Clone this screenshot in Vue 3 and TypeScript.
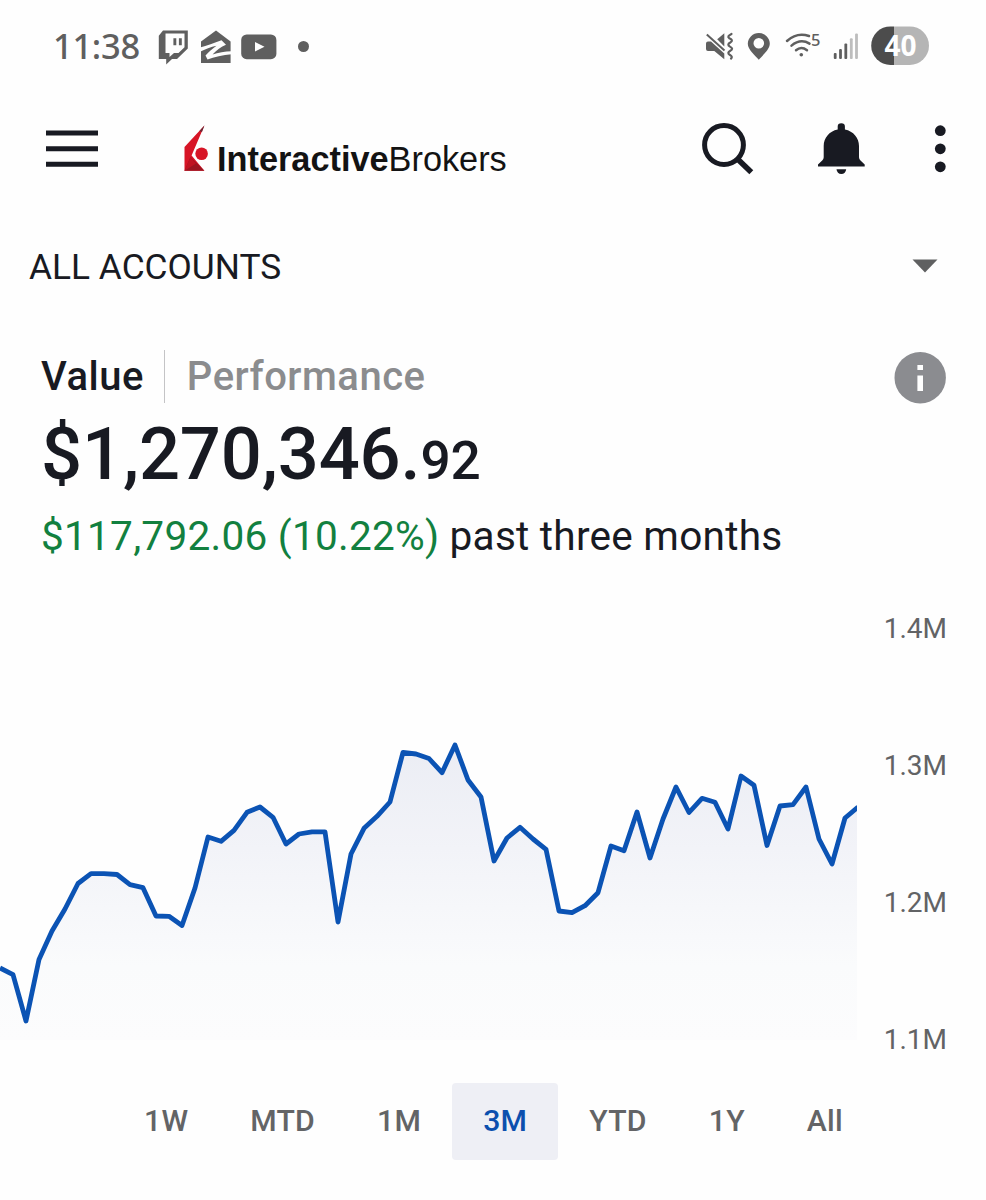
<script setup lang="ts">
import { ref } from 'vue'

const STEP = 13
const CHART_TOP = 600
const FLOOR = 440

// Vertical position of each daily sample inside the plot
const samples: number[] = [
  968, 974.7, 1021, 959.5, 931, 909, 883.5, 873.7, 873.7, 874.5, 884.7, 887.7, 916, 916.3, 925.5,
  888, 837, 841.3, 830.3, 812.3, 807, 817.3, 844, 834, 831.8, 831.8, 922, 854, 828.3, 816.3, 802,
  752.3, 754, 758.5, 772.7, 745, 780, 797, 861, 838, 827.3, 839, 849.3, 911, 912.7, 905.7, 892.7,
  846, 850.7, 812, 858, 819, 787, 812.5, 798.3, 802.3, 829, 776, 785.3, 845.5, 806, 804.7, 787,
  839, 864, 818, 807,
].map((y) => y - CHART_TOP)

const line = samples.map((y, i) => `${i * STEP},${y}`).join(' ')
const area = `0,${FLOOR} ${line} ${(samples.length - 1) * STEP},${FLOOR}`

const axis = ['1.4M', '1.3M', '1.2M', '1.1M']
const ranges = ['1W', 'MTD', '1M', '3M', 'YTD', '1Y', 'All']
const active = ref('3M')
</script>

<template>
  <main class="screen">
    <div class="status">
      <span class="clock">11:38</span>
      <svg class="twitch" width="32" height="40" viewBox="157 26 32 40">
        <path fill="#5f5f5f" fill-rule="evenodd" d="M163 30.5H187.8V48.5L177 59H172L166.2 64.4V59H158.8V35.8ZM165.5 33.6V53H169.5V57L174 53H178.5L184.5 47.2V33.6Z" />
        <path fill="#5f5f5f" d="M173.4 38.3h2.9v7h-2.9zM178.9 38.3h2.9v7h-2.9z" />
      </svg>
      <svg class="zillow" width="32" height="40" viewBox="200 26 32 40">
        <path fill="#5f5f5f" d="M216 30.5L230.6 41.5V63H201V41.5Z" />
        <path fill="#fefefe" d="M200 47.5C207 45.8 214 43 221.5 40.2L226 44.7C221 46.5 216.5 50 212.5 54.6C218 52.6 225 51.4 231.5 51.2V54.2C223 55 214 57 207.5 59.5L205.5 55.6C209 51.5 212.5 48.5 216.5 45.7C211 47 205 49 200 51.8Z" />
      </svg>
      <svg class="tube" width="36" height="40" viewBox="241 26 36 40">
        <rect x="241.2" y="34.4" width="35.2" height="24.8" rx="5.5" fill="#5f5f5f" />
        <path fill="#fff" d="M255 42V51.6L264.5 46.8Z" />
      </svg>
      <span class="more" />
      <svg class="system" width="230" height="40" viewBox="700 26 230 40">
        <g fill="#5f5f5f">
          <path d="M706 43.5Q706 41.5 708 41.5H711L724.3 53.5V59.2L714.3 51H708Q706 51 706 49Z" />
          <path d="M717.2 39.3L724.3 33.2V46.4Z" />
          <path d="M706.8 34.5L724.5 50.5" stroke="#5f5f5f" stroke-width="2" />
          <path d="M731.5 34Q726.5 36.5 729.3 38.2Q734 40.3 730.3 42.5Q726.5 44.5 730 46.6Q734 48.7 730.3 50.8Q726.5 53 730 55Q733 56.8 731 58.6" fill="none" stroke="#5f5f5f" stroke-width="2.2" stroke-linecap="round" />
          <path fill-rule="evenodd" d="M758.8 59.8C755 55.5 747.8 49.5 747.8 43.8A11 10.8 0 0 1 769.8 43.8C769.8 49.5 762.5 55.5 758.8 59.8ZM758.8 38a5.3 5.3 0 1 0 0 10.6a5.3 5.3 0 1 0 0-10.6Z" />
          <circle cx="801.3" cy="54.7" r="1.8" />
          <rect x="833.8" y="53" width="2.8" height="6" rx="1" />
          <rect x="839.1" y="49" width="2.8" height="10" rx="1" />
          <rect x="844.4" y="43.5" width="2.8" height="15.5" rx="1" />
        </g>
        <g fill="#bdbdbd">
          <rect x="849.9" y="38.3" width="2.8" height="20.7" rx="1" />
          <rect x="855.1" y="33.5" width="2.8" height="25.5" rx="1" />
        </g>
        <g fill="none" stroke="#5f5f5f" stroke-width="2.5" stroke-linecap="round">
          <path d="M796 50.2Q801.3 45.8 807 50.2" />
          <path d="M791.5 45.6Q800.5 38.2 809.5 43.6" />
          <path d="M787 41Q797 31.8 809 36" />
        </g>
        <text x="811" y="46" class="wifi-gen">5</text>
        <path fill="#4c4c4c" d="M894 26.4H890.5A19.3 19.3 0 0 0 890.5 65H894Z" />
        <path fill="#b5b5b5" d="M894 26.4H909.7A19.3 19.3 0 0 1 909.7 65H894Z" />
        <text x="900.5" y="55.7" class="battery">40</text>
      </svg>
    </div>

    <header class="bar">
      <svg class="menu" width="52" height="40" viewBox="46 130 52 40">
        <path d="M46 133.1H98M46 148.7H98M46 164.2H98" stroke="#181a22" stroke-width="5" />
      </svg>
      <div class="brand">
        <svg width="28" height="50" viewBox="183 125 28 50">
          <path fill="#d71526" d="M204.4 125.6L184.5 147V170.8H204.4L191.6 155.5Z" />
          <path fill="#9c1420" d="M190.5 157L204.4 170.8H184.5Z" />
          <path fill="#c01322" d="M184.5 170.8L190.5 157L196 163.5Z" />
          <path fill="#6b2633" d="M204.4 125.6L199.5 131L202 132Z" />
          <circle cx="201.6" cy="153.8" r="6.3" fill="#d71526" />
        </svg>
        <span class="name"><b>Interactive</b>Brokers</span>
      </div>
      <svg class="tools" width="250" height="60" viewBox="700 120 250 60">
        <g fill="none" stroke="#181a22">
          <circle cx="724" cy="145" r="19.4" stroke-width="5" />
          <path d="M737.8 159.2L751.3 172.3" stroke-width="5.6" />
        </g>
        <path fill="#181a22" d="M837.7 129.5V126.5Q837.7 123.2 841.3 123.2Q844.9 123.2 844.9 126.5V129.5C853.5 131.2 859 138 859 146V157.2Q859 159 860.5 160.4L864.7 164.6V166.4H818V164.6L822.2 160.4Q823.7 159 823.7 157.2V146C823.7 138 829.2 131.2 837.7 129.5Z" />
        <path fill="#181a22" d="M836.5 169.3H846.2Q845.6 174 841.3 174Q837.1 174 836.5 169.3Z" />
        <g fill="#181a22">
          <circle cx="940.3" cy="130.7" r="5.4" />
          <circle cx="940.3" cy="148.8" r="5.4" />
          <circle cx="940.3" cy="166.8" r="5.4" />
        </g>
      </svg>
    </header>

    <div class="account">
      <span>ALL ACCOUNTS</span>
      <svg width="26" height="14" viewBox="0 0 26 14"><path fill="#5f6061" d="M.5 .5H25.5L13 13.5Z" /></svg>
    </div>

    <section class="summary">
      <div class="modes">
        <span class="mode on">Value</span>
        <span class="mode">Performance</span>
        <svg class="info" width="52" height="55" viewBox="0 0 52 55">
          <circle cx="26.2" cy="28.7" r="25.7" fill="#8b8c90" />
          <path fill="#fff" d="M23.4 16h5.6v5h-5.6zM23.4 26.4h5.6v15.6h-5.6z" />
        </svg>
      </div>
      <div class="total">$1,270,346.<small>92</small></div>
      <div class="change"><em>$117,792.06 (10.22%)</em> past three months</div>
    </section>

    <section class="chart">
      <svg width="857" height="450" viewBox="0 0 857 450">
        <defs>
          <linearGradient id="fade" gradientUnits="userSpaceOnUse" x1="0" y1="145" x2="0" y2="440">
            <stop offset="0" stop-color="#ebedf4" />
            <stop offset=".35" stop-color="#f2f3f8" />
            <stop offset=".75" stop-color="#fafbfc" />
            <stop offset="1" stop-color="#fcfcfd" />
          </linearGradient>
        </defs>
        <polygon :points="area" fill="url(#fade)" />
        <polyline :points="line" fill="none" stroke="#0b53b4" stroke-width="4.8" stroke-linejoin="round" />
      </svg>
      <div class="axis">
        <span v-for="label in axis" :key="label">{{ label }}</span>
      </div>
    </section>

    <nav class="ranges">
      <button v-for="r in ranges" :key="r" :class="{ on: r === active }" @click="active = r">{{ r }}</button>
    </nav>
  </main>
</template>

<style>
body {
  background: #fefefe;
}
</style>

<style scoped>
.screen {
  width: 986px;
  height: 1200px;
  overflow: hidden;
  background: #fefefe;
  color: #181a22;
  font-family: Roboto, 'Liberation Sans', sans-serif;
}
svg {
  display: block;
  flex: none;
}
.status {
  display: flex;
  align-items: center;
  height: 92px;
  padding-left: 53px;
}
.clock {
  width: 104px;
  font: 500 34.5px/40px 'Noto Sans', sans-serif;
  letter-spacing: -0.3px;
  color: #5f5f5f;
}
.zillow {
  margin-left: 11px;
}
.tube {
  margin-left: 9px;
}
.more {
  width: 11px;
  height: 11px;
  margin-left: 21px;
  border-radius: 50%;
  background: #5f5f5f;
}
.system {
  margin-left: 391px;
}
.wifi-gen {
  font: 500 16.5px 'Noto Sans', sans-serif;
  fill: #5f5f5f;
}
.battery {
  font: 700 28px 'Noto Sans', sans-serif;
  fill: #fff;
  text-anchor: middle;
}
.bar {
  display: flex;
  align-items: center;
  height: 116px;
  padding-left: 46px;
}
.brand {
  display: flex;
  align-items: center;
  width: 517px;
  margin-left: 85px;
}
.name {
  padding: 18px 0 0 6px;
  font: 34.3px/40px 'Liberation Sans', sans-serif;
  color: #131313;
}
.account {
  display: flex;
  align-items: center;
  justify-content: space-between;
  height: 116px;
  padding: 0 48px 0 29px;
  font-size: 35.3px;
}
.account span {
  padding-top: 1px;
}
.summary {
  height: 276px;
  padding: 26px 40px 0 41px;
  box-sizing: border-box;
}
.modes {
  display: flex;
  align-items: center;
  height: 53px;
}
.mode {
  font-size: 40px;
  font-weight: 500;
  line-height: 53px;
  letter-spacing: 0.5px;
  color: #8b8c8e;
}
.mode.on {
  padding-right: 20px;
  margin-right: 22px;
  border-right: 1px solid #c4c4c6;
  color: #181a22;
}
.info {
  margin-left: auto;
}
.total {
  height: 96px;
  font-size: 72.3px;
  line-height: 104px;
  letter-spacing: -0.15px;
  font-weight: 500;
}
.total small {
  font-size: 53.2px;
}
.change {
  font-size: 40.6px;
  line-height: 75px;
  letter-spacing: 0.23px;
}
.change em {
  font-style: normal;
  color: #12803f;
}
.chart {
  display: flex;
  justify-content: space-between;
  height: 483px;
  padding-right: 39px;
}
.axis {
  display: flex;
  flex-direction: column;
  font-size: 28px;
  line-height: 137px;
  margin-top: -40px;
  color: #626365;
}
.ranges {
  display: flex;
  height: 77px;
  padding-left: 113px;
}
.ranges button {
  padding: 0 31px 3px;
  border: 0;
  border-radius: 4px;
  background: none;
  font: 500 30.2px Roboto, sans-serif;
  letter-spacing: 0.25px;
  color: #636466;
}
.ranges .on {
  background: #eeeff5;
  color: #0b4fae;
}
</style>
